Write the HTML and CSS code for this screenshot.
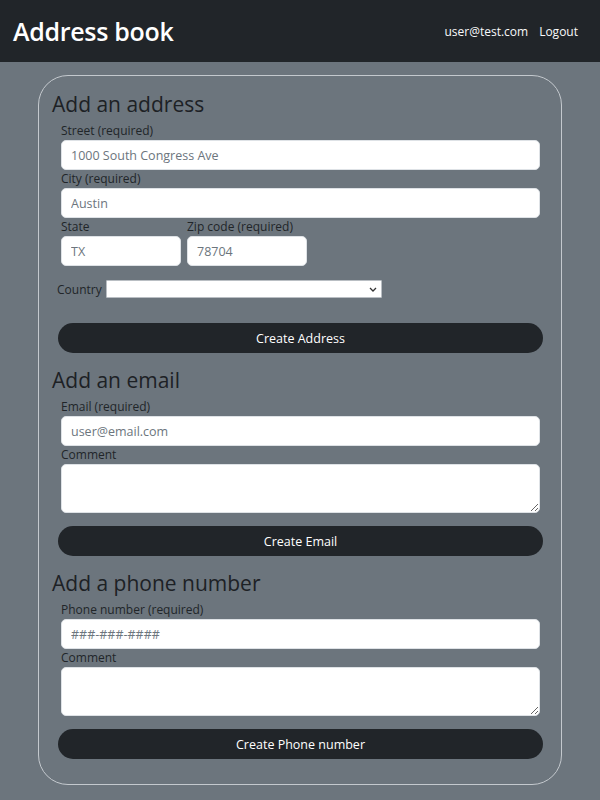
FILE: index.html
```html
<!DOCTYPE html>
<html lang="en">
<head>
<meta charset="utf-8">
<title>Address book</title>
<link rel="stylesheet" href="styles.css">
</head>
<body>
<header class="navbar">
  <div class="brand">Address book</div>
  <nav class="nav">
    <span class="nav-link">user@test.com</span>
    <span class="nav-link">Logout</span>
  </nav>
</header>
<main class="card">
  <section class="section">
    <h2 class="heading">Add an address</h2>
    <div class="fields">
      <label class="label">Street (required)</label>
      <input class="input" type="text" placeholder="1000 South Congress Ave">
      <label class="label">City (required)</label>
      <input class="input" type="text" placeholder="Austin">
      <div class="row">
        <div class="col">
          <label class="label">State</label>
          <input class="input" type="text" placeholder="TX">
        </div>
        <div class="col">
          <label class="label">Zip code (required)</label>
          <input class="input" type="text" placeholder="78704">
        </div>
      </div>
    </div>
    <div class="country">
      <label class="label-inline">Country</label>
      <span class="select-wrap">
        <select class="select"><option></option></select>
        <svg class="chevron" width="8" height="5" viewBox="0 0 8 5"><path d="M1 1 L4 4 L7 1" fill="none" stroke="#333" stroke-width="1.3"/></svg>
      </span>
    </div>
    <button class="btn btn-first">Create Address</button>
  </section>
  <section class="section">
    <h2 class="heading">Add an email</h2>
    <div class="fields">
      <label class="label">Email (required)</label>
      <input class="input" type="text" placeholder="user@email.com">
      <label class="label">Comment</label>
      <textarea class="textarea"></textarea>
    </div>
    <button class="btn">Create Email</button>
  </section>
  <section class="section">
    <h2 class="heading">Add a phone number</h2>
    <div class="fields">
      <label class="label">Phone number (required)</label>
      <input class="input" type="text" placeholder="###-###-####">
      <label class="label">Comment</label>
      <textarea class="textarea"></textarea>
    </div>
    <button class="btn">Create Phone number</button>
  </section>
</main>
</body>
</html>
```

FILE: styles.css
```css
* { box-sizing: border-box; }
html, body { margin: 0; padding: 0; }
body {
  background: #6c757d;
  font-family: "Open Sans", "Noto Sans", sans-serif;
  color: #212529;
  min-height: 800px;
}
.navbar {
  background: #212529;
  height: 62px;
  display: flex;
  align-items: center;
  justify-content: space-between;
  padding: 0 22px 0 13px;
}
.brand {
  color: #fff;
  font-size: 25px;
  font-weight: 600;
  letter-spacing: -0.3px;
}
.nav { display: flex; gap: 11px; }
.nav-link { color: #f8f9fa; font-size: 12px; }
.card {
  width: 524px;
  margin: 13px 0 0 38px;
  border: 1px solid #c4c9ce;
  border-radius: 30px;
  padding: 15px 18px 25px 13px;
}
.section + .section { margin-top: 14px; }
.heading {
  margin: 0 0 5px;
  font-size: 21px;
  line-height: 26px;
  font-weight: 500;
  color: #1d2125;
}
.fields {
  margin: 0 3px 0 9px;
  display: flex;
  flex-direction: column;
}
.label {
  display: block;
  font-size: 12px;
  line-height: 18px;
  color: #212529;
}
.input, .textarea {
  display: block;
  width: 100%;
  height: 30px;
  border: 1px solid #dee2e6;
  border-radius: 5px;
  background: #fff;
  padding: 0 9px;
  font-family: inherit;
  font-size: 12.5px;
  color: #212529;
  outline: none;
}
.input::placeholder { color: #6c757d; }
.textarea { height: 49px; resize: vertical; }
.row { display: flex; gap: 6px; }
.col { width: 120px; }
.country {
  display: flex;
  align-items: center;
  gap: 4px;
  margin: 14px 0 0 5px;
}
.label-inline { font-size: 12px; color: #212529; }
.select-wrap { position: relative; display: block; }
.select {
  display: block;
  appearance: none;
  -webkit-appearance: none;
  width: 276px;
  height: 18px;
  background: #fff;
  border: 1px solid #b9bec3;
  border-radius: 1px;
  font-size: 12px;
}
.chevron {
  position: absolute;
  right: 5px;
  top: 7px;
}
.btn {
  display: block;
  width: 485px;
  height: 30px;
  margin: 13px 0 0 6px;
  border: none;
  border-radius: 15px;
  background: #212529;
  color: #fff;
  font-family: inherit;
  font-size: 12.5px;
}
.btn-first { margin-top: 25px; }
```
